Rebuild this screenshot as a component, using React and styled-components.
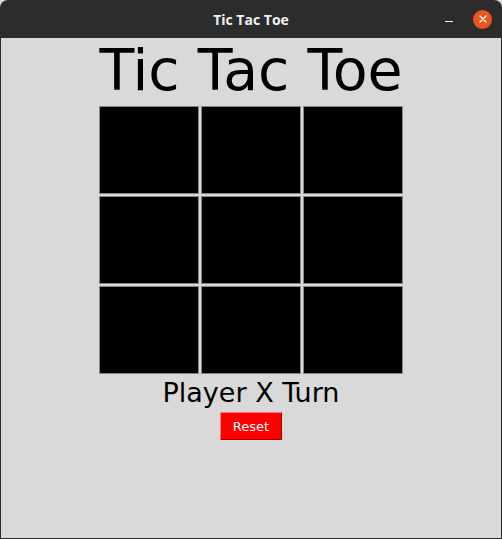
import styled, { createGlobalStyle } from 'styled-components';

const GlobalStyle = createGlobalStyle`
  html, body {
    margin: 0;
    padding: 0;
    background: #d9d9d9;
  }
`;

const Window = styled.div`
  width: 502px;
  height: 539px;
  box-sizing: border-box;
  display: flex;
  flex-direction: column;
  background: #2c2c2c;
  border-radius: 8px 8px 0 0;
  overflow: hidden;
`;

const TitleBar = styled.div`
  height: 38px;
  flex-shrink: 0;
  display: grid;
  grid-template-columns: 1fr auto 1fr;
  align-items: center;
  color: #f2f2f2;
  font-family: 'Open Sans', 'DejaVu Sans', sans-serif;
  font-weight: 700;
  font-size: 14px;
`;

const WindowTitle = styled.span`
  grid-column: 2;
  line-height: 1;
  margin-top: 1px;
`;

const Controls = styled.div`
  grid-column: 3;
  justify-self: end;
  display: flex;
  align-items: center;
  gap: 20px;
  padding-right: 10px;
`;

const Minimize = styled.span`
  width: 8px;
  height: 1px;
  margin-top: 4px;
  background: #f2f2f2;
`;

const Close = styled.span`
  width: 19px;
  height: 19px;
  border-radius: 50%;
  background: #e95420;
  display: grid;
  place-items: center;
`;

const Body = styled.div`
  flex: 1;
  margin: 0 1px 1px;
  background: #d9d9d9;
  display: flex;
  flex-direction: column;
  align-items: center;
  font-family: 'DejaVu Sans', sans-serif;
  color: #000;
`;

const Heading = styled.div`
  font-size: 57px;
  line-height: 64px;
  height: 64px;
  padding-bottom: 4px;
  white-space: nowrap;
`;

const Board = styled.div`
  display: grid;
  grid-template-columns: repeat(3, 100px);
  grid-template-rows: repeat(3, 88px);
  gap: 2px;
`;

const Cell = styled.button`
  box-sizing: border-box;
  margin: 0;
  padding: 0;
  background: #000;
  border: 1px solid #878787;
  border-radius: 0;
`;

const Status = styled.div`
  font-size: 27px;
  line-height: 38px;
  height: 38px;
`;

const ResetButton = styled.button`
  box-sizing: border-box;
  width: 62px;
  height: 28px;
  margin: 0;
  padding: 0;
  background: #ff0000;
  color: #fff;
  font-family: 'DejaVu Sans', sans-serif;
  font-size: 13px;
  border: 1px solid;
  border-color: #ff7a7a #a80000 #a80000 #ff7a7a;
  border-radius: 0;
`;

export default function App() {
  const cells = Array.from({ length: 9 });
  return (
    <>
      <GlobalStyle />
      <Window>
        <TitleBar>
          <WindowTitle>Tic Tac Toe</WindowTitle>
          <Controls>
            <Minimize />
            <Close>
              <svg width="8" height="8" viewBox="0 0 8 8">
                <path d="M1 1L7 7M7 1L1 7" stroke="#fff" strokeWidth="1.4" strokeLinecap="round" />
              </svg>
            </Close>
          </Controls>
        </TitleBar>
        <Body>
          <Heading>Tic Tac Toe</Heading>
          <Board>
            {cells.map((_, i) => (
              <Cell key={i} />
            ))}
          </Board>
          <Status>Player X Turn</Status>
          <ResetButton>Reset</ResetButton>
        </Body>
      </Window>
    </>
  );
}
